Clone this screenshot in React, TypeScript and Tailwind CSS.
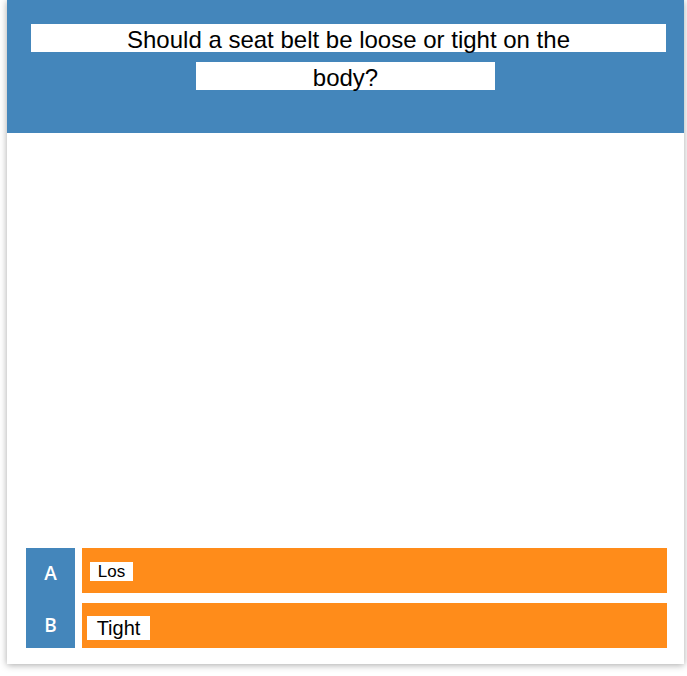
export default function App() {
  return (
    <div className="h-[676px] w-[687px] bg-white pl-[7px] pr-[3px]" style={{ fontFamily: '"Liberation Sans", Arial, sans-serif' }}>
      <div className="flex h-[664px] flex-col bg-white shadow-[0_1px_7px_rgba(0,0,0,0.35)]">
        <div className="h-[133px] bg-[#4486bb] pt-[24px]">
          <div className="ml-[24px] mr-[18px] flex h-[28px] items-center justify-center bg-white pt-[3px] text-[24px] leading-none text-black">
            Should a seat belt be loose or tight on the
          </div>
          <div className="mx-auto mt-[10px] flex h-[28px] w-[299px] items-center justify-center bg-white pt-[3px] text-[24px] leading-none text-black">
            body?
          </div>
        </div>
        <div className="flex-1" />
        <div className="flex gap-[7px] pb-[16px] pl-[19px] pr-[17px]">
          <div className="flex w-[49px] flex-col bg-[#4486bb] text-[19px] font-semibold text-white" style={{ fontFamily: '"Open Sans", sans-serif' }}>
            <div className="flex h-[50px] items-center justify-center">A</div>
            <div className="flex h-[50px] items-center justify-center pt-[4px]">B</div>
          </div>
          <div className="flex flex-1 flex-col gap-[10px]">
            <div className="flex h-[45px] items-center bg-[#ff8c1a] pl-[8px] pt-[1px]">
              <span className="flex h-[19px] w-[43px] items-center justify-center bg-white pt-[2px] text-[17px] text-black">Los</span>
            </div>
            <div className="flex h-[45px] items-center bg-[#ff8c1a] pl-[5px] pt-[4px]">
              <span className="flex h-[24px] w-[63px] items-center justify-center bg-white text-[20px] text-black">Tight</span>
            </div>
          </div>
        </div>
      </div>
    </div>
  );
}
